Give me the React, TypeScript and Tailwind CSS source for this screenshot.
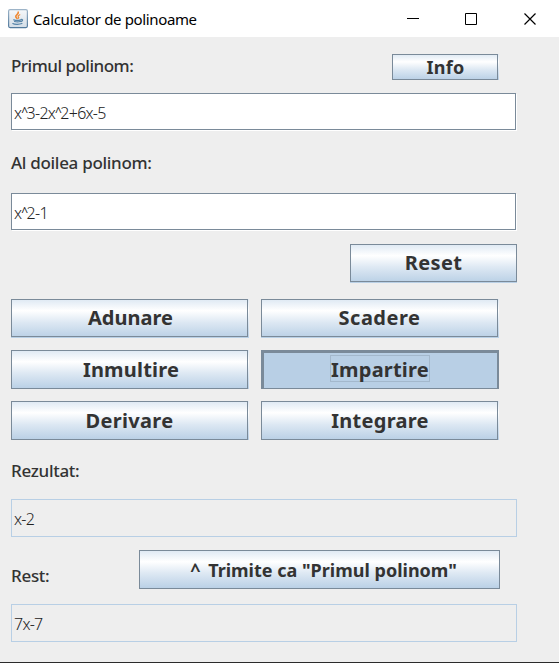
import type { ReactNode } from "react";

const ui = "font-['Noto_Sans','Open_Sans',sans-serif]";
const face =
  "bg-[linear-gradient(to_bottom,#dde8f3_0%,#ffffff_30%,#dde8f3_60%,#b8cfe5_100%)]";

function Label({ className, text = "tracking-[-0.3px]", children }: { className: string; text?: string; children: ReactNode }) {
  return (
    <div className={`whitespace-nowrap text-[17px] font-medium leading-6 text-[#333333] ${className}`}>
      <span className={text}>{children}</span>
    </div>
  );
}

function Button({ className, text, children }: { className: string; text: string; children: ReactNode }) {
  return (
    <button className={`block shrink-0 ${face} ${className}`}>
      <span className="flex h-full w-full items-center justify-center border border-[#7a8a99]">
        <span className={`whitespace-nowrap font-bold text-[#333333] ${text}`}>{children}</span>
      </span>
    </button>
  );
}

function Polynomial({ text }: { text: string }) {
  return (
    <span className="whitespace-nowrap text-[16px] font-light leading-5 tracking-[-0.75px] text-[#222222]">
      {text.split("^").map((part, i) => (
        <span key={i}>
          {i > 0 && <span className="inline-block align-[3px] text-[12px] font-normal leading-none tracking-[-1.6px]">^</span>}
          {part}
        </span>
      ))}
    </span>
  );
}

function Field({ value }: { value: string }) {
  return (
    <div className="flex h-[37px] w-[505px] items-center border border-[#7a8a99] bg-white pt-0.5 pl-[2px] shadow-[1px_1px_0_#ffffff]">
      <Polynomial text={value} />
    </div>
  );
}

function Output({ value }: { value: string }) {
  return (
    <div className="flex h-[38px] w-[506px] items-center border border-[#b8cfe5] pt-0.5 pl-[2px]">
      <Polynomial text={value} />
    </div>
  );
}

function JavaIcon() {
  return (
    <svg width="20" height="20" viewBox="0 0 20 20">
      <defs>
        <linearGradient id="tile" x1="0" y1="0" x2="0" y2="1">
          <stop offset="0" stopColor="#f6f8fa" />
          <stop offset="1" stopColor="#d3dde6" />
        </linearGradient>
        <linearGradient id="edge" x1="0" y1="0" x2="0" y2="1">
          <stop offset="0" stopColor="#9db4c8" />
          <stop offset="1" stopColor="#527a9d" />
        </linearGradient>
      </defs>
      <rect x="0.6" y="0.6" width="18.8" height="18" rx="1.5" fill="url(#tile)" stroke="url(#edge)" strokeWidth="1.2" />
      <g fill="none" strokeLinecap="round">
        <path d="M10.2 3.2c1 1.800-3.200 2.800-2.400 4.600 .3 .8 .9 1 1.200 1.600" stroke="#ef8a35" strokeWidth="1.700" />
        <path d="M11.800 5.800c-1.800 .9-2 1.600-1.300 2.300 .4 .5 .2 .9-.3 1.200" stroke="#ef8a35" strokeWidth="1.200" />
        <path d="M5.800 10.800c2 .7 5 .7 7 0M6.600 12.500c2 .6 3.800 .6 5.600 0M13 10.500c2-.6 2.200 1.400 0 2.100" stroke="#5684a8" strokeWidth="1.300" />
        <path d="M4.800 14.500c1.600 1.100 6.500 1.200 9.200 .1" stroke="#5684a8" strokeWidth="1.100" />
      </g>
    </svg>
  );
}

export default function App() {
  const big = "text-[20px] leading-6";
  return (
    <div className={`flex h-[663px] w-[559px] flex-col overflow-hidden border-b border-[#2b2b2b] bg-[#eeeeee] ${ui}`}>
      <header className="flex h-[37px] shrink-0 items-center bg-white pl-2">
        <JavaIcon />
        <span className="ml-[5px] whitespace-nowrap text-[15px] leading-5 tracking-[-0.36px] text-black">
          Calculator de polinoame
        </span>
        <svg className="ml-auto" width="152" height="36" viewBox="0 0 152 36" fill="none" stroke="#000000">
          <path d="M0 17.500h12M58.500 12.500h11v11h-11z" />
          <path d="M117.500 12.500l11 11m0-11l-11 11" strokeWidth="1.200" />
        </svg>
      </header>

      <main className="flex flex-col pl-[11px]">
        <div className="flex h-14 items-start">
          <Label className="mt-[17px] w-[381px]" text="tracking-[-0.5px]">Primul polinom:</Label>
          <Button className="mt-[17px] h-[26px] w-[107px] pr-px" text="text-[18px] leading-5 tracking-[0.3px] pl-px">Info</Button>
        </div>
        <Field value="x^3-2x^2+6x-5" />
        <Label className="mt-[21px] mb-[18px]">Al doilea polinom:</Label>
        <Field value="x^2-1" />
        <Button className="mt-[14px] ml-[339px] h-[39px] w-[167px] pb-px" text={`${big} tracking-[0.4px]`}>Reset</Button>

        <div className="mt-4 flex gap-3">
          <Button className="h-[39px] w-[238px] pr-px pb-px" text={`${big} pl-[2px]`}>Adunare</Button>
          <Button className="h-[39px] w-[238px] pr-px pb-px" text={`${big} tracking-[0.5px]`}>Scadere</Button>
        </div>
        <div className="mt-3 flex gap-3">
          <Button className="h-[39px] w-[238px] pr-px" text={`${big} pl-[3px] tracking-[0.2px]`}>Inmultire</Button>
          <button className="flex h-[39px] w-[238px] items-start justify-center border-t-3 border-r-2 border-b border-l-3 border-[#7a8a99] bg-[#b8cfe5] pt-[2px] pr-[1px]">
            <span className="flex h-[27px] w-[100px] items-center justify-center border border-[#a3b8cc] pt-[3px]">
              <span className={`whitespace-nowrap font-bold text-[#333333] tracking-[0.2px] ${big}`}>Impartire</span>
            </span>
          </button>
        </div>
        <div className="mt-3 flex gap-3">
          <Button className="h-[39px] w-[238px] pr-px" text={`${big} tracking-[0.3px]`}>Derivare</Button>
          <Button className="h-[39px] w-[238px] pr-px" text={`${big} pl-px tracking-[0.3px]`}>Integrare</Button>
        </div>

        <Label className="mt-[19px] mb-4">Rezultat:</Label>
        <Output value="x-2" />
        <div className="mt-[13px] flex h-[39px]">
          <Label className="mt-[14px] w-32">Rest:</Label>
          <Button className="h-[39px] w-[361px]" text="pl-2 text-[18px] leading-6">
            <span className="mr-[3px]">^</span> Trimite ca &quot;Primul polinom&quot;
          </Button>
        </div>
        <div className="mt-[15px]">
          <Output value="7x-7" />
        </div>
      </main>
    </div>
  );
}
